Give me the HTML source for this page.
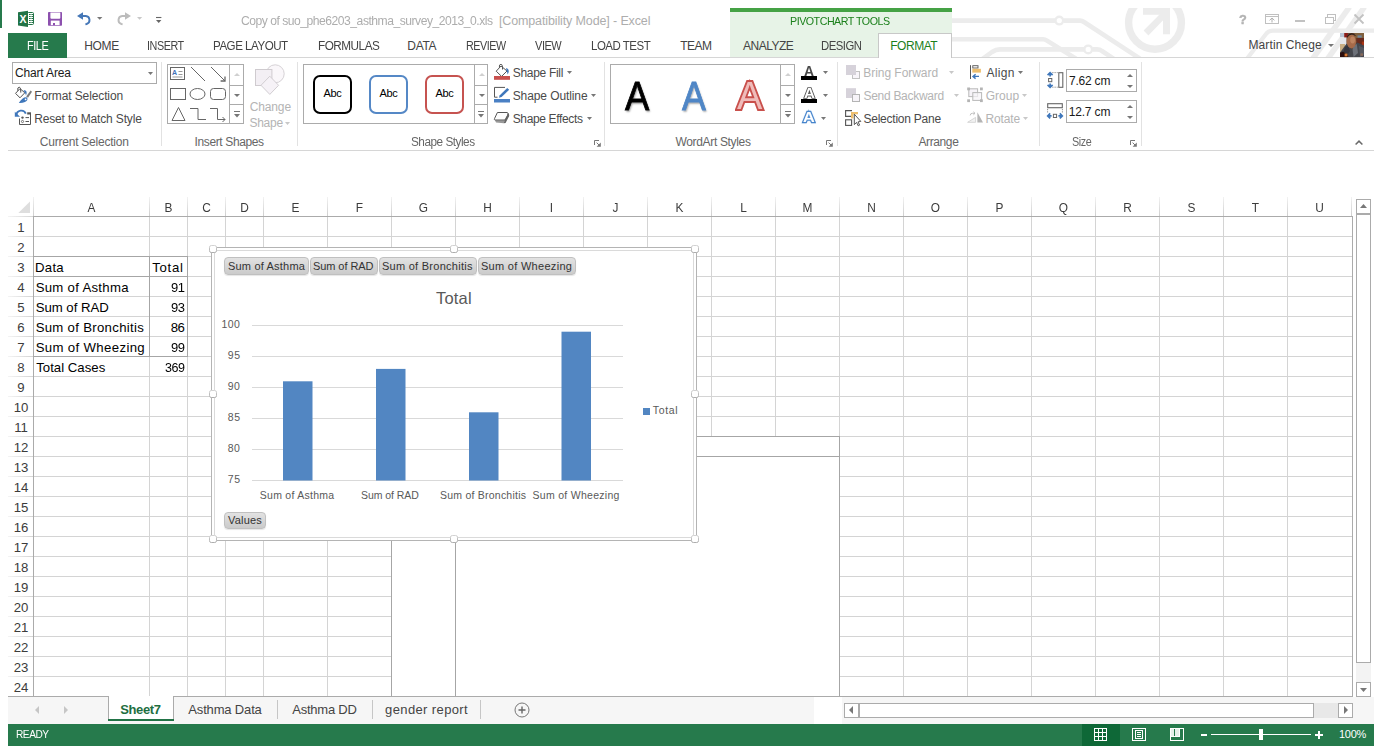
<!DOCTYPE html>
<html lang="en"><head><meta charset="utf-8"><title>Excel - PivotChart Tools</title>
<style>
html,body{margin:0;padding:0;background:#fff;}
body{width:1382px;height:754px;position:relative;overflow:hidden;font-family:"Liberation Sans", sans-serif;}
.t{position:absolute;white-space:pre;line-height:1;transform-origin:0 50%;}
svg{overflow:visible}
</style></head><body>
<div style="position:absolute;left:0px;top:0px;width:2px;height:28px;background:#267a4c;"></div>
<svg style="position:absolute;left:0;top:0" width="1382" height="58" viewBox="0 0 1382 58"><defs><clipPath id="cpT"><rect x="940" y="8" width="434" height="49"/></clipPath></defs><g clip-path="url(#cpT)">
<g fill="none" stroke="#ececec" stroke-width="4.6" stroke-linejoin="round">
<path d="M952 20.6 H1055 M1064 20.6 H1080 Q1082 20.6 1084 22 L1140 58.6"/>
<circle cx="1059.3" cy="20.6" r="3.8" stroke-width="2.4"/>
<path d="M952 39.3 H1043 Q1045 39.3 1047 40.6 L1076 58.8"/>
<path d="M981 60 L992 52 Q996 49.4 1000 49.4 H1084 M1092.5 49.4 H1097 Q1100 49.4 1102 51 L1114 59"/>
<circle cx="1088.2" cy="49.4" r="3.8" stroke-width="2.4"/>
<circle cx="1155" cy="22.8" r="26.4" stroke-width="7.4"/>
<path d="M1246 60 L1266 34 Q1268.5 30.6 1273 30.6 H1374" stroke-width="4.2"/>
<path d="M1312.5 59 L1349.5 7" stroke-width="5.6"/>
<path d="M1327.5 59 L1364.5 7" stroke-width="5.6"/>
</g>
<g fill="#ececec" stroke="none">
<path d="M1143 4 H1170 V34.3 H1163 V14.8 H1143 Z"/>
<path d="M1143.6 30.6 L1164 10 L1168.6 14.6 L1148.4 35.4 Z"/>
</g>
</g></svg>
<svg style="position:absolute;left:18px;top:10px;" width="17" height="18" viewBox="0 0 17 18">
<rect x="9.5" y="2.5" width="6" height="12" rx="1" fill="#fff" stroke="#217346" stroke-width="1"/>
<path d="M11 4.5H12.7M13.4 4.5H15M11 6.5H12.7M13.4 6.5H15M11 8.5H12.7M13.4 8.5H15M11 10.5H12.7M13.4 10.5H15M11 12.5H12.7M13.4 12.5H15" stroke="#217346" stroke-width="1.1" fill="none"/>
<path d="M0 2.2 L10 0.7 V17 L0 15.4 Z" fill="#217346"/>
<text x="4.9" y="12.7" font-size="10.5" font-weight="bold" fill="#fff" text-anchor="middle" font-family="Liberation Sans, sans-serif">X</text>
</svg>
<svg style="position:absolute;left:48px;top:12px;" width="14" height="14" viewBox="0 0 14 14">
<rect x="0" y="0" width="14" height="13.8" rx="0.8" fill="#8c50ae"/>
<path d="M2.4 0.6 H12.3 V5.7 Q12.3 6.7 11.3 6.7 H3.4 Q2.4 6.7 2.4 5.7 Z" fill="#fff"/>
<rect x="2.8" y="8.6" width="8.8" height="4.5" fill="#fff"/>
<rect x="5" y="11" width="2" height="2.2" fill="#8c50ae"/>
</svg>
<svg style="position:absolute;left:76px;top:11px;" width="16" height="15" viewBox="0 0 16 15">
<path d="M7 1.2 L1 5 L7 8.8 Z" fill="#4577b7"/>
<path d="M5 5 H9.8 A4.1 4.1 0 0 1 10.6 13 L9.4 13.3" fill="none" stroke="#4577b7" stroke-width="1.9"/>
</svg>
<svg style="position:absolute;left:97px;top:17px;" width="5" height="3" viewBox="0 0 5 3"><path d="M0 0 H5.4 L2.7 2.8 Z" fill="#777"/></svg>
<svg style="position:absolute;left:116px;top:11px;" width="16" height="15" viewBox="0 0 16 15">
<path d="M9 1.2 L15 5 L9 8.8 Z" fill="#bcbcbc"/>
<path d="M11 5 H6.2 A4.1 4.1 0 0 0 5.4 13 L6.6 13.3" fill="none" stroke="#bcbcbc" stroke-width="1.9"/>
</svg>
<svg style="position:absolute;left:137px;top:17px;" width="5" height="3" viewBox="0 0 5 3"><path d="M0 0 H5.2 L2.6 2.8 Z" fill="#c8c8c8"/></svg>
<svg style="position:absolute;left:156px;top:16px;" width="6" height="8" viewBox="0 0 6 8"><path d="M0 1.5 H5.4" stroke="#666" stroke-width="1.1"/><path d="M0 4 H5.4 L2.7 7 Z" fill="#666"/></svg>
<div style="position:absolute;left:730px;top:8px;width:222px;height:4px;background:#45a245;"></div>
<div style="position:absolute;left:730px;top:12px;width:222px;height:45px;background:#e7f3e7;"></div>
<div style="position:absolute;left:8px;top:57px;width:1366px;height:1px;background:#d6d6d6;"></div>
<div style="position:absolute;left:8px;top:33px;width:59px;height:25px;background:#267a4c;"></div>
<div style="position:absolute;left:878px;top:33px;width:74px;height:25px;background:#ffffff;border:1px solid #c8c8c8;border-bottom:none;box-sizing:border-box;"></div>
<svg style="position:absolute;left:1265px;top:14px;" width="14" height="10" viewBox="0 0 14 10"><rect x="0.5" y="0.5" width="13" height="9" fill="none" stroke="#c0c0c0"/><path d="M0 2.5H14" stroke="#c0c0c0"/><path d="M7 4.2V8.5M4.6 6.3L7 4L9.4 6.3" stroke="#b0b0b0" fill="none"/></svg>
<div style="position:absolute;left:1295px;top:20px;width:10px;height:2px;background:#c2c2c2;"></div>
<svg style="position:absolute;left:1325px;top:14px;" width="11" height="10" viewBox="0 0 11 10"><rect x="2.5" y="0.5" width="8" height="6" fill="none" stroke="#c0c0c0"/><rect x="0.5" y="3.5" width="8" height="6" fill="#fff" stroke="#c0c0c0"/></svg>
<svg style="position:absolute;left:1354px;top:14px;" width="10" height="10" viewBox="0 0 10 10"><path d="M0.5 0.5 L9.5 9.5 M9.5 0.5 L0.5 9.5" stroke="#c2c2c2" stroke-width="1.8"/></svg>
<svg style="position:absolute;left:1328px;top:44px;" width="6" height="3" viewBox="0 0 6 3"><path d="M0 0 H6 L3 3 Z" fill="#777"/></svg>
<svg style="position:absolute;left:1340px;top:33px;" width="24" height="24" viewBox="0 0 24 24">
<defs><clipPath id="av"><rect width="24" height="24"/></clipPath><filter id="avb" x="-10%" y="-10%" width="120%" height="120%"><feGaussianBlur stdDeviation="0.55"/></filter></defs>
<g clip-path="url(#av)"><rect width="24" height="24" fill="#6a4a34"/><g filter="url(#avb)">
<rect x="-1" y="-1" width="7.5" height="14" fill="#e4e6ea"/>
<rect x="-1" y="-1" width="5" height="5" fill="#b8c4d4"/>
<rect x="-1" y="11" width="6" height="8" fill="#c8ae84"/>
<rect x="4.2" y="-1" width="3.6" height="5.4" fill="#8a1c16"/>
<rect x="14.5" y="-1" width="11" height="6" fill="#80603c"/>
<rect x="17.5" y="2.4" width="4.2" height="2.2" fill="#6e86a0"/>
<rect x="16.5" y="5" width="9" height="7" fill="#6a2a1a"/>
<rect x="21.8" y="8.6" width="3" height="3.6" fill="#a83418"/>
<path d="M-1 25 L-1 21 L6.6 10.4 L9.4 14.4 L12.4 16.4 L15 11.4 L17.2 9.4 L25 13 V25 Z" fill="#44464e"/>
<path d="M13 13 L16.8 11 L18 20 L13.6 24 L12.6 17 Z" fill="#6c7078"/>
<path d="M5 14 L8 12 L10 18 L6 24 H2 Z" fill="#34363c"/>
<path d="M19 13 L24 15 V22 L20 24 Z" fill="#565860"/>
<ellipse cx="11.4" cy="8.4" rx="4.7" ry="6.9" fill="#a66a48"/>
<ellipse cx="12.6" cy="7" rx="2.4" ry="3.4" fill="#be8460"/>
<path d="M6.8 3.4 Q11 -2.4 15.8 2.4 L15.4 3 Q11 -0.4 7.2 4.4 Z" fill="#2c1c16"/>
<path d="M-1 25 V20.4 L3 18.4 L7.4 22 L9 25 Z" fill="#2c100a"/>
<rect x="4.6" y="20.6" width="2.8" height="2.8" fill="#d87830"/>
<rect x="20.4" y="20.4" width="2.6" height="2.4" fill="#8a6a58"/>
</g></g></svg>
<div style="position:absolute;left:8px;top:150px;width:1366px;height:1px;background:#d6d6d6;"></div>
<div style="position:absolute;left:161px;top:62px;width:1px;height:84px;background:#e2e2e2;"></div>
<div style="position:absolute;left:297px;top:62px;width:1px;height:84px;background:#e2e2e2;"></div>
<div style="position:absolute;left:604px;top:62px;width:1px;height:84px;background:#e2e2e2;"></div>
<div style="position:absolute;left:837px;top:62px;width:1px;height:84px;background:#e2e2e2;"></div>
<div style="position:absolute;left:1039px;top:62px;width:1px;height:84px;background:#e2e2e2;"></div>
<div style="position:absolute;left:1141px;top:62px;width:1px;height:84px;background:#e2e2e2;"></div>
<div style="position:absolute;left:12px;top:62px;width:145px;height:22px;background:#fff;border:1px solid #ababab;box-sizing:border-box;"></div>
<svg style="position:absolute;left:147.5px;top:71.5px;" width="5" height="3" viewBox="0 0 5 3"><path d="M0 0 H5 L2.5 3 Z" fill="#777777"/></svg>
<svg style="position:absolute;left:14px;top:86px;" width="18" height="18" viewBox="0 0 18 18">
<path d="M1.5 7.4 L6 2.6 L10.8 6.8 L6 11.8 Z" fill="#fff" stroke="#555" stroke-width="1"/>
<path d="M3.8 4.8 Q3.2 1 5.4 1.1 Q7 1.4 6.8 6.6" fill="none" stroke="#555" stroke-width="1"/>
<path d="M9.6 4 Q14.2 4.2 12 9.6 Q11.6 7.4 10.6 6.6 Z" fill="#3f77bb"/>
<path d="M4.8 16.9 Q9 10.4 13 11.4 Q14.6 14 11 16 Q8 17.2 4.8 16.9 Z" fill="#3f77bb"/>
<circle cx="11.6" cy="13.3" r="0.9" fill="#fff"/>
<path d="M12.2 10.4 L16.6 4.6 L18 5.8 L14 11.8 Z" fill="#7a7a7a"/>
</svg>
<svg style="position:absolute;left:14px;top:110px;" width="18" height="16" viewBox="0 0 18 16">
<path d="M11.8 3.6 A4.9 4.9 0 0 0 2.4 5.2" fill="none" stroke="#3f77bb" stroke-width="1.9"/>
<path d="M0.8 1.8 V6.8 H6 Z" fill="#3f77bb"/>
<path d="M5.5 8.5 V14.5 H16.5 V3" fill="none" stroke="#555" stroke-width="1"/>
<rect x="13.2" y="2.3" width="3.8" height="2.2" fill="#555"/>
<circle cx="8.5" cy="7.6" r="1.2" fill="#555"/>
<circle cx="8.5" cy="11.5" r="1.1" fill="#fff" stroke="#555" stroke-width="0.8"/>
<path d="M11.5 7.6 H15 M11.5 11.5 H15" stroke="#555" stroke-width="1"/>
</svg>
<div style="position:absolute;left:167px;top:64px;width:77px;height:60px;background:#fff;border:1px solid #ababab;box-sizing:border-box;"></div>
<div style="position:absolute;left:229px;top:64px;width:1px;height:60px;background:#ababab;"></div>
<div style="position:absolute;left:229px;top:85px;width:15px;height:1px;background:#ababab;"></div>
<div style="position:absolute;left:229px;top:104px;width:15px;height:1px;background:#ababab;"></div>
<svg style="position:absolute;left:234.0px;top:73px;" width="6" height="3" viewBox="0 0 6 3"><path d="M0 3 H6 L3 0 Z" fill="#d0d0d0"/></svg>
<svg style="position:absolute;left:234.0px;top:93.6px;" width="6" height="3" viewBox="0 0 6 3"><path d="M0 0 H6 L3 3 Z" fill="#777"/></svg>
<svg style="position:absolute;left:233.5px;top:111px;" width="6" height="7" viewBox="0 0 6 7"><rect x="0" y="0" width="6" height="1" fill="#777" shape-rendering="crispEdges"/><path d="M0 3 H6 L3 6.4 Z" fill="#777"/></svg>
<svg style="position:absolute;left:167px;top:64px;" width="62" height="60" viewBox="0 0 62 60">
<g fill="none" stroke="#666" stroke-width="1">
<rect x="3.5" y="3.5" width="14" height="12" fill="#fff"/>
<path d="M11.5 7.5H15.5M11.5 10.5H15.5M5.5 13H15.5" stroke="#999"/>
<path d="M24 3 L38 17"/>
<path d="M44 3 L58 17"/><path d="M58 12.6 V17 H53.6" stroke-width="1.3"/>
<rect x="3.5" y="24.5" width="15" height="11"/>
<ellipse cx="30.5" cy="30" rx="7.5" ry="5.5"/>
<rect x="43.5" y="24.5" width="15" height="11" rx="3"/>
<path d="M11.5 43.5 L18 56.5 H5 Z"/>
<path d="M23 44.5 H31 V55.5 H39"/>
<path d="M43 44.5 H50.5 V55.5 H58 M55.5 53 L58 55.5 L55.5 58"/>
</g>
<text x="5" y="11" font-size="7" font-weight="bold" fill="#3f6fb7" font-family="Liberation Sans, sans-serif">A</text>
</svg>
<svg style="position:absolute;left:255px;top:64px;" width="30" height="32" viewBox="0 0 30 32">
<circle cx="20.2" cy="9.8" r="9" fill="#faf7fa" stroke="#d6d2d6"/>
<rect x="0.5" y="5.5" width="16.4" height="16" fill="#f3eff4" stroke="#cfcbcf"/>
<path d="M14.8 12.2 L23.6 21.3 L14.8 30.4 L6 21.3 Z" fill="#f6f2f7" stroke="#d2ced2"/>
</svg>
<svg style="position:absolute;left:285px;top:122px;" width="5" height="3" viewBox="0 0 5 3"><path d="M0 0 H5 L2.5 3 Z" fill="#c8c8c8"/></svg>
<div style="position:absolute;left:303px;top:64px;width:185px;height:60px;background:#fff;border:1px solid #ababab;box-sizing:border-box;"></div>
<div style="position:absolute;left:474px;top:64px;width:1px;height:60px;background:#ababab;"></div>
<div style="position:absolute;left:474px;top:85px;width:14px;height:1px;background:#ababab;"></div>
<div style="position:absolute;left:474px;top:104px;width:14px;height:1px;background:#ababab;"></div>
<svg style="position:absolute;left:478.5px;top:73px;" width="6" height="3" viewBox="0 0 6 3"><path d="M0 3 H6 L3 0 Z" fill="#d0d0d0"/></svg>
<svg style="position:absolute;left:478.5px;top:93.6px;" width="6" height="3" viewBox="0 0 6 3"><path d="M0 0 H6 L3 3 Z" fill="#777"/></svg>
<svg style="position:absolute;left:478.0px;top:111px;" width="6" height="7" viewBox="0 0 6 7"><rect x="0" y="0" width="6" height="1" fill="#777" shape-rendering="crispEdges"/><path d="M0 3 H6 L3 6.4 Z" fill="#777"/></svg>
<div style="position:absolute;left:313px;top:75px;width:39px;height:39px;background:#fff;border:2px solid #000000;border-radius:7px;box-sizing:border-box;"></div>
<div style="position:absolute;left:369px;top:75px;width:39px;height:39px;background:#fff;border:2px solid #5588c6;border-radius:7px;box-sizing:border-box;"></div>
<div style="position:absolute;left:425px;top:75px;width:39px;height:39px;background:#fff;border:2px solid #c65350;border-radius:7px;box-sizing:border-box;"></div>
<svg style="position:absolute;left:494px;top:63px;" width="17" height="18" viewBox="0 0 17 18">
<path d="M2.2 8.2 L7 3 L13 8 L7.6 13.4 Z" fill="#fff" stroke="#555" stroke-width="1"/>
<path d="M5.4 4.6 Q4.8 1.2 7 1.3 Q8.8 1.4 8.5 6.5" fill="none" stroke="#555" stroke-width="1"/>
<path d="M12 5 Q16.6 6 13.6 11.6 Q13.4 9 12.6 8 Z" fill="#3f77bb"/>
<rect x="0" y="13" width="16" height="3.8" fill="#c9504e"/>
</svg>
<svg style="position:absolute;left:566.5px;top:71px;" width="5" height="3" viewBox="0 0 5 3"><path d="M0 0 H5 L2.5 3 Z" fill="#777777"/></svg>
<svg style="position:absolute;left:494px;top:86px;" width="17" height="18" viewBox="0 0 17 18">
<path d="M3.5 11.2 H0.5 V1.4 H11" fill="none" stroke="#555" stroke-width="1"/>
<path d="M13.2 2 L15.2 3.8 L7.6 11 L4.8 11.8 L5.8 9.2 Z" fill="#3f77bb"/>
<rect x="0" y="13" width="16" height="3.5" fill="#4a80c4"/>
</svg>
<svg style="position:absolute;left:590.5px;top:94px;" width="5" height="3" viewBox="0 0 5 3"><path d="M0 0 H5 L2.5 3 Z" fill="#777777"/></svg>
<svg style="position:absolute;left:494px;top:112px;" width="17" height="13" viewBox="0 0 17 13">
<path d="M1 8.2 H10.6 L9.8 11.3 L2 10.6 Z" fill="#999"/>
<path d="M13.6 0.6 Q16.4 2.4 14.4 5.6 L11.6 11 L9.8 11.3 L10.6 8.2 Z" fill="#666"/>
<path d="M3.4 0.5 H13 Q14.8 0.8 13.6 3.2 L11 8 H0.8 Q0 7.6 0.6 6.4 Z" fill="#fdfdfd" stroke="#555" stroke-width="1"/>
</svg>
<svg style="position:absolute;left:587px;top:117px;" width="5" height="3" viewBox="0 0 5 3"><path d="M0 0 H5 L2.5 3 Z" fill="#777777"/></svg>
<svg style="position:absolute;left:593.5px;top:139.5px;" width="7" height="7" viewBox="0 0 7 7"><path d="M0.5 5 V0.5 H5" fill="none" stroke="#777" stroke-width="1"/><path d="M2.6 2.6 L5 5" stroke="#777" stroke-width="1"/><path d="M6.8 2.6 V6.8 H2.6 Z" fill="#777"/></svg>
<div style="position:absolute;left:610px;top:64px;width:185px;height:60px;background:#fff;border:1px solid #ababab;box-sizing:border-box;"></div>
<div style="position:absolute;left:780px;top:64px;width:1px;height:60px;background:#ababab;"></div>
<div style="position:absolute;left:780px;top:85px;width:15px;height:1px;background:#ababab;"></div>
<div style="position:absolute;left:780px;top:104px;width:15px;height:1px;background:#ababab;"></div>
<svg style="position:absolute;left:785.0px;top:73px;" width="6" height="3" viewBox="0 0 6 3"><path d="M0 3 H6 L3 0 Z" fill="#d0d0d0"/></svg>
<svg style="position:absolute;left:785.0px;top:93.6px;" width="6" height="3" viewBox="0 0 6 3"><path d="M0 0 H6 L3 3 Z" fill="#777"/></svg>
<svg style="position:absolute;left:784.5px;top:111px;" width="6" height="7" viewBox="0 0 6 7"><rect x="0" y="0" width="6" height="1" fill="#777" shape-rendering="crispEdges"/><path d="M0 3 H6 L3 6.4 Z" fill="#777"/></svg>
<div style="position:absolute;left:801px;top:76px;width:16px;height:4px;background:#000;"></div>
<svg style="position:absolute;left:823px;top:71px;" width="5" height="3" viewBox="0 0 5 3"><path d="M0 0 H5 L2.5 3 Z" fill="#777777"/></svg>
<div style="position:absolute;left:801px;top:99px;width:16px;height:4px;background:#000;"></div>
<svg style="position:absolute;left:823px;top:94px;" width="5" height="3" viewBox="0 0 5 3"><path d="M0 0 H5 L2.5 3 Z" fill="#777777"/></svg>
<svg style="position:absolute;left:821px;top:117px;" width="5" height="3" viewBox="0 0 5 3"><path d="M0 0 H5 L2.5 3 Z" fill="#777777"/></svg>
<svg style="position:absolute;left:826px;top:139.5px;" width="7" height="7" viewBox="0 0 7 7"><path d="M0.5 5 V0.5 H5" fill="none" stroke="#777" stroke-width="1"/><path d="M2.6 2.6 L5 5" stroke="#777" stroke-width="1"/><path d="M6.8 2.6 V6.8 H2.6 Z" fill="#777"/></svg>
<svg style="position:absolute;left:845px;top:64px;" width="16" height="16" viewBox="0 0 16 16"><rect x="7.5" y="7.5" width="7" height="7" fill="#f8f5fa" stroke="#c2c2c2"/><rect x="1" y="1" width="10" height="10" fill="#d6d2da"/></svg>
<svg style="position:absolute;left:948.5px;top:71px;" width="5" height="3" viewBox="0 0 5 3"><path d="M0 0 H5 L2.5 3 Z" fill="#c8c8c8"/></svg>
<svg style="position:absolute;left:845px;top:87px;" width="16" height="16" viewBox="0 0 16 16"><rect x="1" y="1.2" width="10" height="9.8" fill="#d6d2da"/><rect x="7.5" y="7.5" width="7" height="7" fill="#f6f3f8" stroke="#b4b4b4"/></svg>
<svg style="position:absolute;left:954px;top:94px;" width="5" height="3" viewBox="0 0 5 3"><path d="M0 0 H5 L2.5 3 Z" fill="#c8c8c8"/></svg>
<svg style="position:absolute;left:845px;top:110px;" width="17" height="16" viewBox="0 0 17 16">
<path d="M7 0.6 H0.6 V6.4 H7" fill="none" stroke="#555" stroke-width="1.1"/>
<path d="M6 2 H13 V4.2 H8.4 V8.6 H6 Z" fill="#eebf6e"/>
<rect x="0.6" y="9.8" width="6" height="5.6" fill="#fff" stroke="#555" stroke-width="1.1"/>
<path d="M9.3 4.2 V14.6 L11.6 12.4 L13.2 15.8 L14.6 15.1 L13 11.9 L15.8 11.4 Z" fill="#fff" stroke="#444" stroke-width="0.9" stroke-linejoin="round"/>
</svg>
<svg style="position:absolute;left:970px;top:65px;" width="12" height="15" viewBox="0 0 12 15">
<path d="M0.5 0.2 V14" stroke="#555" stroke-width="1"/>
<rect x="2.8" y="0.7" width="5.2" height="2.3" fill="#fff" stroke="#555" stroke-width="0.9"/>
<rect x="2.3" y="3.8" width="8.6" height="3.8" fill="#eebf6e"/>
<path d="M9 11.4 H3 M5.6 9.2 L3 11.4 L5.6 13.6" fill="none" stroke="#3f77bb" stroke-width="1.4"/>
</svg>
<svg style="position:absolute;left:1017.5px;top:71px;" width="5" height="3" viewBox="0 0 5 3"><path d="M0 0 H5 L2.5 3 Z" fill="#777777"/></svg>
<svg style="position:absolute;left:967px;top:87px;" width="17" height="16" viewBox="0 0 17 16">
<rect x="1.8" y="1.8" width="8.8" height="7.8" fill="#f6f3f8" stroke="#b8b8b8"/>
<rect x="5.8" y="5.6" width="8.8" height="7.8" fill="#f6f3f8" fill-opacity="0.7" stroke="#b8b8b8"/>
<g fill="#b4b4b4"><rect x="0.2" y="0.5" width="2.8" height="2.8"/><rect x="13" y="0.5" width="2.8" height="2.8"/><rect x="0.2" y="12.3" width="2.8" height="2.8"/><rect x="13" y="12.3" width="2.8" height="2.8"/></g>
</svg>
<svg style="position:absolute;left:1022px;top:94px;" width="5" height="3" viewBox="0 0 5 3"><path d="M0 0 H5 L2.5 3 Z" fill="#c8c8c8"/></svg>
<svg style="position:absolute;left:967px;top:111px;" width="17" height="13" viewBox="0 0 17 13">
<path d="M0.6 11.3 H8.6 V6.4 Z" fill="#f2f2f2" stroke="#d2d2d2" stroke-width="0.9"/>
<path d="M10.4 1.2 V11.6 H16 Z" fill="#b4b4b4"/>
<path d="M3.2 4.4 Q3.4 2.2 5.4 2.3 H8 M6.4 0.8 L8 2.3 L6.4 3.8" fill="none" stroke="#c0c0c0" stroke-width="1"/>
</svg>
<svg style="position:absolute;left:1023px;top:117px;" width="5" height="3" viewBox="0 0 5 3"><path d="M0 0 H5 L2.5 3 Z" fill="#c8c8c8"/></svg>
<svg style="position:absolute;left:1046px;top:71px;" width="18" height="18" viewBox="0 0 18 18">
<rect x="12.8" y="1.7" width="4" height="14.6" fill="#fff" stroke="#666" stroke-width="1.1"/>
<path d="M6.4 1.6 H11.6 M6.4 16.2 H11.6" stroke="#777" stroke-width="1" stroke-dasharray="1 1.2"/>
<rect x="2.6" y="7.5" width="3.2" height="3.2" fill="#fff" stroke="#666" stroke-width="1"/>
<path d="M4.1 2 V5.6 M1.6 4.2 L4.1 1.7 L6.6 4.2" fill="none" stroke="#3f77bb" stroke-width="1.7"/>
<path d="M4.1 12.4 V16 M1.6 13.8 L4.1 16.3 L6.6 13.8" fill="none" stroke="#3f77bb" stroke-width="1.7"/>
</svg>
<div style="position:absolute;left:1066px;top:69px;width:71px;height:23px;background:#fff;border:1px solid #ababab;box-sizing:border-box;"></div>
<svg style="position:absolute;left:1126.5px;top:74px;" width="6" height="3" viewBox="0 0 6 3"><path d="M0 3 H6 L3 0 Z" fill="#777"/></svg>
<svg style="position:absolute;left:1126.5px;top:84.5px;" width="6" height="3" viewBox="0 0 6 3"><path d="M0 0 H6 L3 3 Z" fill="#777"/></svg>
<svg style="position:absolute;left:1046px;top:103px;" width="18" height="17" viewBox="0 0 18 17">
<rect x="1.7" y="0.7" width="14.6" height="4" fill="#fff" stroke="#666" stroke-width="1.1"/>
<path d="M1.6 6.2 V10.6 M16.4 6.2 V10.6" stroke="#777" stroke-width="1" stroke-dasharray="1 1.2"/>
<rect x="7.4" y="11.3" width="3.2" height="3.2" fill="#fff" stroke="#666" stroke-width="1"/>
<path d="M2 12.9 H5.6 M4.2 10.4 L1.7 12.9 L4.2 15.4" fill="none" stroke="#3f77bb" stroke-width="1.7"/>
<path d="M12.4 12.9 H16 M13.8 10.4 L16.3 12.9 L13.8 15.4" fill="none" stroke="#3f77bb" stroke-width="1.7"/>
</svg>
<div style="position:absolute;left:1066px;top:100px;width:71px;height:23px;background:#fff;border:1px solid #ababab;box-sizing:border-box;"></div>
<svg style="position:absolute;left:1126.5px;top:105px;" width="6" height="3" viewBox="0 0 6 3"><path d="M0 3 H6 L3 0 Z" fill="#777"/></svg>
<svg style="position:absolute;left:1126.5px;top:115.5px;" width="6" height="3" viewBox="0 0 6 3"><path d="M0 0 H6 L3 3 Z" fill="#777"/></svg>
<svg style="position:absolute;left:1130px;top:139.5px;" width="7" height="7" viewBox="0 0 7 7"><path d="M0.5 5 V0.5 H5" fill="none" stroke="#777" stroke-width="1"/><path d="M2.6 2.6 L5 5" stroke="#777" stroke-width="1"/><path d="M6.8 2.6 V6.8 H2.6 Z" fill="#777"/></svg>
<svg style="position:absolute;left:1355px;top:139.5px;" width="8" height="5" viewBox="0 0 8 5"><path d="M0.6 4.5 L4 1.1 L7.4 4.5" fill="none" stroke="#6a6a6a" stroke-width="1.5"/></svg>
<svg style="position:absolute;left:0;top:0" width="1382" height="754" viewBox="0 0 1382 754" shape-rendering="crispEdges"><defs><linearGradient id="rhg" x1="0" x2="1" y1="0" y2="0"><stop offset="0" stop-color="#f4f4f4"/><stop offset="1" stop-color="#d2d2d2"/></linearGradient><linearGradient id="chg" x1="0" x2="0" y1="0" y2="1"><stop offset="0" stop-color="#f2f2f2"/><stop offset="1" stop-color="#cfcfcf"/></linearGradient></defs><rect x="34" y="236" width="1318" height="1" fill="#d4d4d4"/><rect x="8" y="236" width="26" height="1" fill="url(#rhg)"/><rect x="34" y="256" width="1318" height="1" fill="#d4d4d4"/><rect x="8" y="256" width="26" height="1" fill="url(#rhg)"/><rect x="34" y="276" width="1318" height="1" fill="#d4d4d4"/><rect x="8" y="276" width="26" height="1" fill="url(#rhg)"/><rect x="34" y="296" width="1318" height="1" fill="#d4d4d4"/><rect x="8" y="296" width="26" height="1" fill="url(#rhg)"/><rect x="34" y="316" width="1318" height="1" fill="#d4d4d4"/><rect x="8" y="316" width="26" height="1" fill="url(#rhg)"/><rect x="34" y="336" width="1318" height="1" fill="#d4d4d4"/><rect x="8" y="336" width="26" height="1" fill="url(#rhg)"/><rect x="34" y="356" width="1318" height="1" fill="#d4d4d4"/><rect x="8" y="356" width="26" height="1" fill="url(#rhg)"/><rect x="34" y="376" width="1318" height="1" fill="#d4d4d4"/><rect x="8" y="376" width="26" height="1" fill="url(#rhg)"/><rect x="34" y="396" width="1318" height="1" fill="#d4d4d4"/><rect x="8" y="396" width="26" height="1" fill="url(#rhg)"/><rect x="34" y="416" width="1318" height="1" fill="#d4d4d4"/><rect x="8" y="416" width="26" height="1" fill="url(#rhg)"/><rect x="34" y="436" width="1318" height="1" fill="#d4d4d4"/><rect x="8" y="436" width="26" height="1" fill="url(#rhg)"/><rect x="34" y="456" width="1318" height="1" fill="#d4d4d4"/><rect x="8" y="456" width="26" height="1" fill="url(#rhg)"/><rect x="34" y="476" width="1318" height="1" fill="#d4d4d4"/><rect x="8" y="476" width="26" height="1" fill="url(#rhg)"/><rect x="34" y="496" width="1318" height="1" fill="#d4d4d4"/><rect x="8" y="496" width="26" height="1" fill="url(#rhg)"/><rect x="34" y="516" width="1318" height="1" fill="#d4d4d4"/><rect x="8" y="516" width="26" height="1" fill="url(#rhg)"/><rect x="34" y="536" width="1318" height="1" fill="#d4d4d4"/><rect x="8" y="536" width="26" height="1" fill="url(#rhg)"/><rect x="34" y="556" width="1318" height="1" fill="#d4d4d4"/><rect x="8" y="556" width="26" height="1" fill="url(#rhg)"/><rect x="34" y="576" width="1318" height="1" fill="#d4d4d4"/><rect x="8" y="576" width="26" height="1" fill="url(#rhg)"/><rect x="34" y="596" width="1318" height="1" fill="#d4d4d4"/><rect x="8" y="596" width="26" height="1" fill="url(#rhg)"/><rect x="34" y="616" width="1318" height="1" fill="#d4d4d4"/><rect x="8" y="616" width="26" height="1" fill="url(#rhg)"/><rect x="34" y="636" width="1318" height="1" fill="#d4d4d4"/><rect x="8" y="636" width="26" height="1" fill="url(#rhg)"/><rect x="34" y="656" width="1318" height="1" fill="#d4d4d4"/><rect x="8" y="656" width="26" height="1" fill="url(#rhg)"/><rect x="34" y="676" width="1318" height="1" fill="#d4d4d4"/><rect x="8" y="676" width="26" height="1" fill="url(#rhg)"/><rect x="149" y="217" width="1" height="479" fill="#d4d4d4"/><rect x="187" y="217" width="1" height="479" fill="#d4d4d4"/><rect x="225" y="217" width="1" height="479" fill="#d4d4d4"/><rect x="263" y="217" width="1" height="479" fill="#d4d4d4"/><rect x="327" y="217" width="1" height="479" fill="#d4d4d4"/><rect x="391" y="217" width="1" height="479" fill="#d4d4d4"/><rect x="455" y="217" width="1" height="479" fill="#d4d4d4"/><rect x="519" y="217" width="1" height="479" fill="#d4d4d4"/><rect x="583" y="217" width="1" height="479" fill="#d4d4d4"/><rect x="647" y="217" width="1" height="479" fill="#d4d4d4"/><rect x="711" y="217" width="1" height="479" fill="#d4d4d4"/><rect x="775" y="217" width="1" height="479" fill="#d4d4d4"/><rect x="839" y="217" width="1" height="479" fill="#d4d4d4"/><rect x="903" y="217" width="1" height="479" fill="#d4d4d4"/><rect x="967" y="217" width="1" height="479" fill="#d4d4d4"/><rect x="1031" y="217" width="1" height="479" fill="#d4d4d4"/><rect x="1095" y="217" width="1" height="479" fill="#d4d4d4"/><rect x="1159" y="217" width="1" height="479" fill="#d4d4d4"/><rect x="1223" y="217" width="1" height="479" fill="#d4d4d4"/><rect x="1287" y="217" width="1" height="479" fill="#d4d4d4"/><rect x="33" y="197" width="1" height="19" fill="url(#chg)"/><rect x="149" y="197" width="1" height="19" fill="url(#chg)"/><rect x="187" y="197" width="1" height="19" fill="url(#chg)"/><rect x="225" y="197" width="1" height="19" fill="url(#chg)"/><rect x="263" y="197" width="1" height="19" fill="url(#chg)"/><rect x="327" y="197" width="1" height="19" fill="url(#chg)"/><rect x="391" y="197" width="1" height="19" fill="url(#chg)"/><rect x="455" y="197" width="1" height="19" fill="url(#chg)"/><rect x="519" y="197" width="1" height="19" fill="url(#chg)"/><rect x="583" y="197" width="1" height="19" fill="url(#chg)"/><rect x="647" y="197" width="1" height="19" fill="url(#chg)"/><rect x="711" y="197" width="1" height="19" fill="url(#chg)"/><rect x="775" y="197" width="1" height="19" fill="url(#chg)"/><rect x="839" y="197" width="1" height="19" fill="url(#chg)"/><rect x="903" y="197" width="1" height="19" fill="url(#chg)"/><rect x="967" y="197" width="1" height="19" fill="url(#chg)"/><rect x="1031" y="197" width="1" height="19" fill="url(#chg)"/><rect x="1095" y="197" width="1" height="19" fill="url(#chg)"/><rect x="1159" y="197" width="1" height="19" fill="url(#chg)"/><rect x="1223" y="197" width="1" height="19" fill="url(#chg)"/><rect x="1287" y="197" width="1" height="19" fill="url(#chg)"/><rect x="1351" y="197" width="1" height="19" fill="url(#chg)"/><rect x="392" y="437" width="447" height="259" fill="#fff"/><rect x="8" y="216" width="26" height="1" fill="url(#rhg)"/><rect x="33" y="216" width="1320" height="1" fill="#ababab"/><rect x="33" y="216" width="1" height="481" fill="#ababab"/><rect x="1352" y="216" width="1" height="481" fill="#ababab"/><rect x="8" y="696" width="1345" height="1" fill="#ababab"/><rect x="33" y="256" width="155" height="1" fill="#a6a6a6"/><rect x="33" y="276" width="155" height="1" fill="#a6a6a6"/><rect x="33" y="356" width="155" height="1" fill="#a6a6a6"/><rect x="149" y="256" width="1" height="101" fill="#a6a6a6"/><rect x="187" y="256" width="1" height="101" fill="#a6a6a6"/><rect x="391" y="436" width="449" height="1" fill="#a6a6a6"/><rect x="455" y="456" width="385" height="1" fill="#a6a6a6"/><rect x="391" y="436" width="1" height="260" fill="#a6a6a6"/><rect x="455" y="456" width="1" height="240" fill="#a6a6a6"/><rect x="839" y="436" width="1" height="260" fill="#a6a6a6"/><path d="M30 201.5 V213 H18.3 Z" fill="#dedede" shape-rendering="geometricPrecision"/></svg>
<svg style="position:absolute;left:0;top:0" width="1382" height="754" viewBox="0 0 1382 754"><defs><linearGradient id="hg" x1="0" x2="0" y1="0" y2="1"><stop offset="0" stop-color="#d2d2d2"/><stop offset="1" stop-color="#adadad"/></linearGradient></defs><rect x="211" y="247" width="486" height="294" fill="#fff"/><rect x="211.5" y="247.5" width="485" height="293" fill="none" stroke="#b4b4b4"/><rect x="214.5" y="250.5" width="479" height="287" fill="none" stroke="#dadada"/><rect x="252" y="325" width="371" height="1" fill="#d9d9d9"/><rect x="252" y="356" width="371" height="1" fill="#d9d9d9"/><rect x="252" y="387" width="371" height="1" fill="#d9d9d9"/><rect x="252" y="418" width="371" height="1" fill="#d9d9d9"/><rect x="252" y="449" width="371" height="1" fill="#d9d9d9"/><rect x="252" y="480" width="371" height="1" fill="#d9d9d9"/><rect x="283" y="381.3" width="29.5" height="99.2" fill="#5286c2"/><rect x="376" y="368.9" width="29.5" height="111.6" fill="#5286c2"/><rect x="469" y="412.3" width="29.5" height="68.2" fill="#5286c2"/><rect x="561.5" y="331.7" width="29.5" height="148.8" fill="#5286c2"/><rect x="643" y="408" width="7" height="7" fill="#5286c2"/><rect x="209.5" y="245.5" width="7" height="7" rx="1.8" fill="#fff" stroke="url(#hg)"/><rect x="450.5" y="245.5" width="7" height="7" rx="1.8" fill="#fff" stroke="url(#hg)"/><rect x="691.5" y="245.5" width="7" height="7" rx="1.8" fill="#fff" stroke="url(#hg)"/><rect x="209.5" y="390.5" width="7" height="7" rx="1.8" fill="#fff" stroke="url(#hg)"/><rect x="691.5" y="390.5" width="7" height="7" rx="1.8" fill="#fff" stroke="url(#hg)"/><rect x="209.5" y="535.5" width="7" height="7" rx="1.8" fill="#fff" stroke="url(#hg)"/><rect x="450.5" y="535.5" width="7" height="7" rx="1.8" fill="#fff" stroke="url(#hg)"/><rect x="691.5" y="535.5" width="7" height="7" rx="1.8" fill="#fff" stroke="url(#hg)"/></svg>
<div style="position:absolute;left:224px;top:257px;width:84.5px;height:18px;background:linear-gradient(#e2e2e2,#cbcbcb);border:1px solid #c0c0c0;border-radius:4px;box-sizing:border-box;box-shadow:0 1px 1px rgba(0,0,0,0.10);"></div>
<div style="position:absolute;left:309.5px;top:257px;width:68.0px;height:18px;background:linear-gradient(#e2e2e2,#cbcbcb);border:1px solid #c0c0c0;border-radius:4px;box-sizing:border-box;box-shadow:0 1px 1px rgba(0,0,0,0.10);"></div>
<div style="position:absolute;left:378.5px;top:257px;width:98.0px;height:18px;background:linear-gradient(#e2e2e2,#cbcbcb);border:1px solid #c0c0c0;border-radius:4px;box-sizing:border-box;box-shadow:0 1px 1px rgba(0,0,0,0.10);"></div>
<div style="position:absolute;left:477.5px;top:257px;width:98.0px;height:18px;background:linear-gradient(#e2e2e2,#cbcbcb);border:1px solid #c0c0c0;border-radius:4px;box-sizing:border-box;box-shadow:0 1px 1px rgba(0,0,0,0.10);"></div>
<div style="position:absolute;left:224px;top:511.5px;width:42px;height:17.5px;background:linear-gradient(#e2e2e2,#cbcbcb);border:1px solid #c0c0c0;border-radius:4px;box-sizing:border-box;box-shadow:0 1px 1px rgba(0,0,0,0.10);"></div>
<div style="position:absolute;left:8px;top:697px;width:1366px;height:27px;background:#f6f6f6;"></div>
<div style="position:absolute;left:814px;top:697px;width:28px;height:27px;background:#fff;"></div>
<div style="position:absolute;left:1353px;top:197px;width:21px;height:500px;background:#fff;"></div>
<div style="position:absolute;left:1356px;top:214px;width:15px;height:449px;background:#fff;border:1px solid #ababab;box-sizing:border-box;"></div>
<div style="position:absolute;left:1356px;top:663px;width:15px;height:19px;background:#f3f3f3;"></div>
<div style="position:absolute;left:1356px;top:199px;width:15px;height:15px;background:#fff;border:1px solid #ababab;box-sizing:border-box;"></div>
<svg style="position:absolute;left:1360px;top:204px;" width="7" height="4" viewBox="0 0 7 4"><path d="M0 4 H7 L3.5 0 Z" fill="#777"/></svg>
<div style="position:absolute;left:1356px;top:682px;width:15px;height:15px;background:#fff;border:1px solid #ababab;box-sizing:border-box;"></div>
<svg style="position:absolute;left:1360px;top:688px;" width="7" height="4" viewBox="0 0 7 4"><path d="M0 0 H7 L3.5 4 Z" fill="#777"/></svg>
<div style="position:absolute;left:844px;top:703px;width:15px;height:15px;background:#fff;border:1px solid #ababab;box-sizing:border-box;"></div>
<svg style="position:absolute;left:849px;top:706px;" width="4" height="8" viewBox="0 0 4 8"><path d="M4 0 V8 L0 4 Z" fill="#777"/></svg>
<div style="position:absolute;left:859px;top:703px;width:455px;height:15px;background:#fff;border:1px solid #ababab;box-sizing:border-box;"></div>
<div style="position:absolute;left:1314px;top:703px;width:24px;height:15px;background:#e8e8e8;"></div>
<div style="position:absolute;left:1338px;top:703px;width:15px;height:15px;background:#fff;border:1px solid #ababab;box-sizing:border-box;"></div>
<svg style="position:absolute;left:1344px;top:706px;" width="4" height="8" viewBox="0 0 4 8"><path d="M0 0 V8 L4 4 Z" fill="#777"/></svg>
<div style="position:absolute;left:108px;top:696px;width:66px;height:24px;background:#fff;border-left:1px solid #ababab;border-right:1px solid #ababab;box-sizing:border-box;"></div>
<div style="position:absolute;left:108px;top:719px;width:66px;height:2px;background:#217346;"></div>
<div style="position:absolute;left:277px;top:700px;width:1px;height:19px;background:#c6c6c6;"></div>
<div style="position:absolute;left:372px;top:700px;width:1px;height:19px;background:#c6c6c6;"></div>
<div style="position:absolute;left:480px;top:700px;width:1px;height:19px;background:#c6c6c6;"></div>
<svg style="position:absolute;left:35px;top:706px;" width="4" height="8" viewBox="0 0 4 8"><path d="M4 0 V8 L0 4 Z" fill="#c6c6c6"/></svg>
<svg style="position:absolute;left:64px;top:706px;" width="4" height="8" viewBox="0 0 4 8"><path d="M0 0 V8 L4 4 Z" fill="#c6c6c6"/></svg>
<svg style="position:absolute;left:514px;top:702px;" width="16" height="16" viewBox="0 0 16 16"><circle cx="8" cy="8" r="7" fill="none" stroke="#777" stroke-width="1"/><path d="M4.5 8 H11.5 M8 4.5 V11.5" stroke="#666" stroke-width="1.4"/></svg>
<div style="position:absolute;left:8px;top:724px;width:1366px;height:22px;background:#267a4c;"></div>
<div style="position:absolute;left:1082px;top:724px;width:38px;height:22px;background:#0e6837;"></div>
<svg style="position:absolute;left:1094px;top:728px;" width="13" height="13" viewBox="0 0 13 13"><g shape-rendering="crispEdges"><rect x="0" y="0" width="13" height="13" fill="#fff"/><rect x="1" y="1" width="3" height="3" fill="#0e6837"/><rect x="1" y="5" width="3" height="3" fill="#0e6837"/><rect x="1" y="9" width="3" height="3" fill="#0e6837"/><rect x="5" y="1" width="3" height="3" fill="#0e6837"/><rect x="5" y="5" width="3" height="3" fill="#0e6837"/><rect x="5" y="9" width="3" height="3" fill="#0e6837"/><rect x="9" y="1" width="3" height="3" fill="#0e6837"/><rect x="9" y="5" width="3" height="3" fill="#0e6837"/><rect x="9" y="9" width="3" height="3" fill="#0e6837"/></g></svg>
<svg style="position:absolute;left:1132px;top:728px;" width="14" height="13" viewBox="0 0 14 13"><g shape-rendering="crispEdges"><rect x="0.5" y="0.5" width="13" height="12" fill="none" stroke="#fff"/><rect x="3.5" y="2.5" width="7" height="8" fill="none" stroke="#fff"/><rect x="5" y="4" width="4" height="1" fill="#fff"/><rect x="5" y="6" width="4" height="1" fill="#fff"/><rect x="5" y="8" width="4" height="1" fill="#fff"/></g></svg>
<svg style="position:absolute;left:1170px;top:728px;" width="14" height="13" viewBox="0 0 14 13"><g shape-rendering="crispEdges"><rect x="0.5" y="0.5" width="13" height="12" fill="none" stroke="#fff"/><rect x="1" y="1" width="8" height="7" fill="#e6f0ea"/><rect x="4" y="1" width="1" height="7" fill="#267a4c"/><rect x="9" y="1" width="1" height="8" fill="#fff"/><rect x="1" y="8" width="9" height="1" fill="#fff"/></g></svg>
<div style="position:absolute;left:1201px;top:734px;width:6px;height:2px;background:#fff;"></div>
<div style="position:absolute;left:1211px;top:734px;width:100px;height:1px;background:#fff;"></div>
<div style="position:absolute;left:1259px;top:729px;width:4px;height:11px;background:#fff;"></div>
<div style="position:absolute;left:1315px;top:734px;width:8px;height:2px;background:#fff;"></div>
<div style="position:absolute;left:1318px;top:731px;width:2px;height:8px;background:#fff;"></div>
<span class="t" style="font-size:12.5px;color:#adadad;top:14.75px;left:240.89px;letter-spacing:-0.500px;transform:scaleX(0.9694);">Copy of suo_phe6203_asthma_survey_2013_0.xls</span>
<span class="t" style="font-size:12.5px;color:#adadad;top:14.75px;left:498.89px;letter-spacing:-0.123px;">[Compatibility Mode] - Excel</span>
<span class="t" style="font-size:11px;color:#1c801c;top:15.50px;left:790.06px;letter-spacing:-0.500px;transform:scaleX(0.9719);">PIVOTCHART TOOLS</span>
<span class="t" style="font-size:12px;color:#fff;top:40.00px;left:26.87px;letter-spacing:-0.500px;transform:scaleX(0.9077);">FILE</span>
<span class="t" style="font-size:12px;color:#444444;top:40.00px;left:84.14px;letter-spacing:-0.309px;">HOME</span>
<span class="t" style="font-size:12px;color:#444444;top:40.00px;left:146.67px;letter-spacing:-0.500px;transform:scaleX(0.8989);">INSERT</span>
<span class="t" style="font-size:12px;color:#444444;top:40.00px;left:212.74px;letter-spacing:-0.500px;transform:scaleX(0.9650);">PAGE LAYOUT</span>
<span class="t" style="font-size:12px;color:#444444;top:40.00px;left:317.65px;letter-spacing:-0.500px;transform:scaleX(0.9789);">FORMULAS</span>
<span class="t" style="font-size:12px;color:#444444;top:40.00px;left:407.33px;letter-spacing:-0.334px;">DATA</span>
<span class="t" style="font-size:12px;color:#444444;top:40.00px;left:466.09px;letter-spacing:-0.500px;transform:scaleX(0.8948);">REVIEW</span>
<span class="t" style="font-size:12px;color:#444444;top:40.00px;left:534.80px;letter-spacing:-0.500px;transform:scaleX(0.9162);">VIEW</span>
<span class="t" style="font-size:12px;color:#444444;top:40.00px;left:590.95px;letter-spacing:-0.500px;transform:scaleX(0.9560);">LOAD TEST</span>
<span class="t" style="font-size:12px;color:#444444;top:40.00px;left:680.22px;letter-spacing:-0.500px;">TEAM</span>
<span class="t" style="font-size:12px;color:#444444;top:40.00px;left:743.08px;letter-spacing:-0.500px;">ANALYZE</span>
<span class="t" style="font-size:12px;color:#444444;top:40.00px;left:820.76px;letter-spacing:-0.500px;transform:scaleX(0.9433);">DESIGN</span>
<span class="t" style="font-size:12px;color:#1c801c;top:40.00px;left:890.27px;letter-spacing:-0.489px;">FORMAT</span>
<span class="t" style="font-size:13px;color:#b2b2b2;top:13.00px;font-weight:bold;left:1238.62px;transform:scaleX(0.9800);-webkit-text-stroke:0.4px #b2b2b2;">?</span>
<span class="t" style="font-size:12px;color:#444;top:39.00px;left:1248.50px;letter-spacing:0.095px;">Martin Chege</span>
<span class="t" style="font-size:12px;color:#1a1a1a;top:67.00px;left:14.93px;letter-spacing:-0.149px;">Chart Area</span>
<span class="t" style="font-size:12px;color:#4a4a4a;top:90.00px;left:34.18px;letter-spacing:-0.115px;">Format Selection</span>
<span class="t" style="font-size:12px;color:#4a4a4a;top:113.00px;left:34.18px;letter-spacing:-0.160px;">Reset to Match Style</span>
<span class="t" style="font-size:12px;color:#666666;top:136.00px;left:39.86px;letter-spacing:-0.235px;">Current Selection</span>
<span class="t" style="font-size:12px;color:#b4b4b4;top:101.00px;left:249.66px;letter-spacing:-0.125px;">Change</span>
<span class="t" style="font-size:12px;color:#b4b4b4;top:117.00px;left:249.47px;letter-spacing:-0.264px;">Shape</span>
<span class="t" style="font-size:12px;color:#666666;top:136.00px;left:194.57px;letter-spacing:-0.374px;">Insert Shapes</span>
<span class="t" style="font-size:11px;color:#000;top:87.50px;left:323.41px;letter-spacing:-0.310px;">Abc</span>
<span class="t" style="font-size:11px;color:#000;top:87.50px;left:379.41px;letter-spacing:-0.310px;">Abc</span>
<span class="t" style="font-size:11px;color:#000;top:87.50px;left:435.41px;letter-spacing:-0.310px;">Abc</span>
<span class="t" style="font-size:12px;color:#4a4a4a;top:67.00px;left:512.71px;letter-spacing:-0.303px;">Shape Fill</span>
<span class="t" style="font-size:12px;color:#4a4a4a;top:90.00px;left:512.71px;letter-spacing:-0.098px;">Shape Outline</span>
<span class="t" style="font-size:12px;color:#4a4a4a;top:113.00px;left:512.71px;letter-spacing:-0.354px;">Shape Effects</span>
<span class="t" style="font-size:12px;color:#666666;top:136.00px;left:411.24px;letter-spacing:-0.500px;transform:scaleX(0.9817);">Shape Styles</span>
<span class="t" style="font-size:40px;color:#000;top:76.00px;left:625.40px;transform:scaleX(0.9099);-webkit-text-stroke:0.8px #000;text-shadow:1px 1.5px 2px rgba(0,0,0,0.35);">A</span>
<span class="t" style="font-size:40px;color:#4f86c6;top:76.00px;left:682.40px;transform:scaleX(0.8937);-webkit-text-stroke:0.8px #4f86c6;text-shadow:1px 1.5px 2px rgba(0,0,0,0.3);">A</span>
<span class="t" style="font-size:39.5px;color:#efbcba;top:76.25px;left:737.20px;transform:scaleX(0.9618);-webkit-text-stroke:3.8px #c9504c;paint-order:stroke fill;">A</span>
<span class="t" style="font-size:14px;color:#4a4a4a;top:64.00px;font-weight:bold;left:804.20px;transform:scaleX(0.9934);">A</span>
<span class="t" style="font-size:14px;color:#fff;top:86.00px;font-weight:bold;left:803.69px;transform:scaleX(1.0778);-webkit-text-stroke:1.7px #555;paint-order:stroke fill;">A</span>
<span class="t" style="font-size:15.5px;color:#fff;top:108.75px;font-weight:bold;left:802.67px;transform:scaleX(1.0476);-webkit-text-stroke:2.4px #3f7fc8;paint-order:stroke fill;text-shadow:0 0 2.5px #6fa4e0;">A</span>
<span class="t" style="font-size:12px;color:#666666;top:136.00px;left:675.45px;letter-spacing:-0.331px;">WordArt Styles</span>
<span class="t" style="font-size:12px;color:#b4b4b4;top:67.00px;left:863.33px;letter-spacing:-0.053px;">Bring Forward</span>
<span class="t" style="font-size:12px;color:#b4b4b4;top:90.00px;left:863.46px;letter-spacing:-0.285px;">Send Backward</span>
<span class="t" style="font-size:12px;color:#4a4a4a;top:113.00px;left:863.46px;letter-spacing:-0.232px;">Selection Pane</span>
<span class="t" style="font-size:12px;color:#4a4a4a;top:67.00px;left:986.42px;letter-spacing:0.330px;">Align</span>
<span class="t" style="font-size:12px;color:#b4b4b4;top:90.00px;left:985.67px;letter-spacing:0.045px;">Group</span>
<span class="t" style="font-size:12px;color:#b4b4b4;top:113.00px;left:985.41px;letter-spacing:-0.119px;">Rotate</span>
<span class="t" style="font-size:12px;color:#666666;top:136.00px;left:918.42px;letter-spacing:-0.380px;">Arrange</span>
<span class="t" style="font-size:12px;color:#1a1a1a;top:75.00px;left:1069.01px;letter-spacing:-0.218px;">7.62 cm</span>
<span class="t" style="font-size:12px;color:#1a1a1a;top:106.00px;left:1068.63px;letter-spacing:-0.155px;">12.7 cm</span>
<span class="t" style="font-size:12px;color:#666666;top:136.00px;left:1072.22px;letter-spacing:-0.500px;transform:scaleX(0.8986);">Size</span>
<span class="t" style="font-size:13.2px;color:#3c3c3c;top:200.90px;left:34.00px;width:115.00px;text-align:center;transform:scaleX(0.9);transform-origin:50% 50%;">A</span>
<span class="t" style="font-size:13.2px;color:#3c3c3c;top:200.90px;left:150.00px;width:37.00px;text-align:center;transform:scaleX(0.9);transform-origin:50% 50%;">B</span>
<span class="t" style="font-size:13.2px;color:#3c3c3c;top:200.90px;left:188.00px;width:37.00px;text-align:center;transform:scaleX(0.9);transform-origin:50% 50%;">C</span>
<span class="t" style="font-size:13.2px;color:#3c3c3c;top:200.90px;left:226.00px;width:37.00px;text-align:center;transform:scaleX(0.9);transform-origin:50% 50%;">D</span>
<span class="t" style="font-size:13.2px;color:#3c3c3c;top:200.90px;left:264.00px;width:63.00px;text-align:center;transform:scaleX(0.9);transform-origin:50% 50%;">E</span>
<span class="t" style="font-size:13.2px;color:#3c3c3c;top:200.90px;left:328.00px;width:63.00px;text-align:center;transform:scaleX(0.9);transform-origin:50% 50%;">F</span>
<span class="t" style="font-size:13.2px;color:#3c3c3c;top:200.90px;left:392.00px;width:63.00px;text-align:center;transform:scaleX(0.9);transform-origin:50% 50%;">G</span>
<span class="t" style="font-size:13.2px;color:#3c3c3c;top:200.90px;left:456.00px;width:63.00px;text-align:center;transform:scaleX(0.9);transform-origin:50% 50%;">H</span>
<span class="t" style="font-size:13.2px;color:#3c3c3c;top:200.90px;left:520.00px;width:63.00px;text-align:center;transform:scaleX(0.9);transform-origin:50% 50%;">I</span>
<span class="t" style="font-size:13.2px;color:#3c3c3c;top:200.90px;left:584.00px;width:63.00px;text-align:center;transform:scaleX(0.9);transform-origin:50% 50%;">J</span>
<span class="t" style="font-size:13.2px;color:#3c3c3c;top:200.90px;left:648.00px;width:63.00px;text-align:center;transform:scaleX(0.9);transform-origin:50% 50%;">K</span>
<span class="t" style="font-size:13.2px;color:#3c3c3c;top:200.90px;left:712.00px;width:63.00px;text-align:center;transform:scaleX(0.9);transform-origin:50% 50%;">L</span>
<span class="t" style="font-size:13.2px;color:#3c3c3c;top:200.90px;left:776.00px;width:63.00px;text-align:center;transform:scaleX(0.9);transform-origin:50% 50%;">M</span>
<span class="t" style="font-size:13.2px;color:#3c3c3c;top:200.90px;left:840.00px;width:63.00px;text-align:center;transform:scaleX(0.9);transform-origin:50% 50%;">N</span>
<span class="t" style="font-size:13.2px;color:#3c3c3c;top:200.90px;left:904.00px;width:63.00px;text-align:center;transform:scaleX(0.9);transform-origin:50% 50%;">O</span>
<span class="t" style="font-size:13.2px;color:#3c3c3c;top:200.90px;left:968.00px;width:63.00px;text-align:center;transform:scaleX(0.9);transform-origin:50% 50%;">P</span>
<span class="t" style="font-size:13.2px;color:#3c3c3c;top:200.90px;left:1032.00px;width:63.00px;text-align:center;transform:scaleX(0.9);transform-origin:50% 50%;">Q</span>
<span class="t" style="font-size:13.2px;color:#3c3c3c;top:200.90px;left:1096.00px;width:63.00px;text-align:center;transform:scaleX(0.9);transform-origin:50% 50%;">R</span>
<span class="t" style="font-size:13.2px;color:#3c3c3c;top:200.90px;left:1160.00px;width:63.00px;text-align:center;transform:scaleX(0.9);transform-origin:50% 50%;">S</span>
<span class="t" style="font-size:13.2px;color:#3c3c3c;top:200.90px;left:1224.00px;width:63.00px;text-align:center;transform:scaleX(0.9);transform-origin:50% 50%;">T</span>
<span class="t" style="font-size:13.2px;color:#3c3c3c;top:200.90px;left:1288.00px;width:63.00px;text-align:center;transform:scaleX(0.9);transform-origin:50% 50%;">U</span>
<span class="t" style="font-size:13.2px;color:#3c3c3c;top:220.90px;left:8.00px;width:26.00px;text-align:center;">1</span>
<span class="t" style="font-size:13.2px;color:#3c3c3c;top:240.90px;left:8.00px;width:26.00px;text-align:center;">2</span>
<span class="t" style="font-size:13.2px;color:#3c3c3c;top:260.90px;left:8.00px;width:26.00px;text-align:center;">3</span>
<span class="t" style="font-size:13.2px;color:#3c3c3c;top:280.90px;left:8.00px;width:26.00px;text-align:center;">4</span>
<span class="t" style="font-size:13.2px;color:#3c3c3c;top:300.90px;left:8.00px;width:26.00px;text-align:center;">5</span>
<span class="t" style="font-size:13.2px;color:#3c3c3c;top:320.90px;left:8.00px;width:26.00px;text-align:center;">6</span>
<span class="t" style="font-size:13.2px;color:#3c3c3c;top:340.90px;left:8.00px;width:26.00px;text-align:center;">7</span>
<span class="t" style="font-size:13.2px;color:#3c3c3c;top:360.90px;left:8.00px;width:26.00px;text-align:center;">8</span>
<span class="t" style="font-size:13.2px;color:#3c3c3c;top:380.90px;left:8.00px;width:26.00px;text-align:center;">9</span>
<span class="t" style="font-size:13.2px;color:#3c3c3c;top:400.90px;left:8.00px;width:26.00px;text-align:center;">10</span>
<span class="t" style="font-size:13.2px;color:#3c3c3c;top:420.90px;left:8.00px;width:26.00px;text-align:center;">11</span>
<span class="t" style="font-size:13.2px;color:#3c3c3c;top:440.90px;left:8.00px;width:26.00px;text-align:center;">12</span>
<span class="t" style="font-size:13.2px;color:#3c3c3c;top:460.90px;left:8.00px;width:26.00px;text-align:center;">13</span>
<span class="t" style="font-size:13.2px;color:#3c3c3c;top:480.90px;left:8.00px;width:26.00px;text-align:center;">14</span>
<span class="t" style="font-size:13.2px;color:#3c3c3c;top:500.90px;left:8.00px;width:26.00px;text-align:center;">15</span>
<span class="t" style="font-size:13.2px;color:#3c3c3c;top:520.90px;left:8.00px;width:26.00px;text-align:center;">16</span>
<span class="t" style="font-size:13.2px;color:#3c3c3c;top:540.90px;left:8.00px;width:26.00px;text-align:center;">17</span>
<span class="t" style="font-size:13.2px;color:#3c3c3c;top:560.90px;left:8.00px;width:26.00px;text-align:center;">18</span>
<span class="t" style="font-size:13.2px;color:#3c3c3c;top:580.90px;left:8.00px;width:26.00px;text-align:center;">19</span>
<span class="t" style="font-size:13.2px;color:#3c3c3c;top:600.90px;left:8.00px;width:26.00px;text-align:center;">20</span>
<span class="t" style="font-size:13.2px;color:#3c3c3c;top:620.90px;left:8.00px;width:26.00px;text-align:center;">21</span>
<span class="t" style="font-size:13.2px;color:#3c3c3c;top:640.90px;left:8.00px;width:26.00px;text-align:center;">22</span>
<span class="t" style="font-size:13.2px;color:#3c3c3c;top:660.90px;left:8.00px;width:26.00px;text-align:center;">23</span>
<span class="t" style="font-size:13.2px;color:#3c3c3c;top:680.90px;left:8.00px;width:26.00px;text-align:center;">24</span>
<span class="t" style="font-size:13.2px;color:#000;top:260.90px;left:35.10px;letter-spacing:0.222px;">Data</span>
<span class="t" style="font-size:13.2px;color:#000;top:260.90px;left:152.20px;letter-spacing:0.730px;">Total</span>
<span class="t" style="font-size:13.2px;color:#000;top:280.90px;left:35.65px;letter-spacing:0.291px;">Sum of Asthma</span>
<span class="t" style="font-size:13.2px;color:#000;top:280.90px;left:170.64px;letter-spacing:-0.500px;transform:scaleX(0.9854);">91</span>
<span class="t" style="font-size:13.2px;color:#000;top:300.90px;left:35.65px;letter-spacing:-0.023px;">Sum of RAD</span>
<span class="t" style="font-size:13.2px;color:#000;top:300.90px;left:170.64px;letter-spacing:-0.500px;transform:scaleX(0.9854);">93</span>
<span class="t" style="font-size:13.2px;color:#000;top:320.90px;left:35.65px;letter-spacing:0.301px;">Sum of Bronchitis</span>
<span class="t" style="font-size:13.2px;color:#000;top:320.90px;left:170.64px;letter-spacing:-0.500px;">86</span>
<span class="t" style="font-size:13.2px;color:#000;top:340.90px;left:35.65px;letter-spacing:0.355px;">Sum of Wheezing</span>
<span class="t" style="font-size:13.2px;color:#000;top:340.90px;left:170.64px;letter-spacing:-0.500px;transform:scaleX(0.9854);">99</span>
<span class="t" style="font-size:13.2px;color:#000;top:360.90px;left:36.20px;letter-spacing:0.019px;">Total Cases</span>
<span class="t" style="font-size:13.2px;color:#000;top:360.90px;left:164.85px;letter-spacing:-0.500px;transform:scaleX(0.9500);">369</span>
<span class="t" style="font-size:11px;color:#333;top:260.50px;left:227.93px;letter-spacing:0.196px;">Sum of Asthma</span>
<span class="t" style="font-size:11px;color:#333;top:260.50px;left:312.92px;letter-spacing:-0.053px;">Sum of RAD</span>
<span class="t" style="font-size:11px;color:#333;top:260.50px;left:381.92px;letter-spacing:0.277px;">Sum of Bronchitis</span>
<span class="t" style="font-size:11px;color:#333;top:260.50px;left:480.92px;letter-spacing:0.302px;">Sum of Wheezing</span>
<span class="t" style="font-size:11px;color:#333;top:514.50px;left:228.07px;letter-spacing:0.176px;">Values</span>
<span class="t" style="font-size:16.5px;color:#595959;top:289.75px;left:436.06px;letter-spacing:0.164px;">Total</span>
<span class="t" style="font-size:10.5px;color:#595959;top:318.75px;left:221.42px;letter-spacing:0.502px;">100</span>
<span class="t" style="font-size:10.5px;color:#595959;top:349.75px;left:227.72px;letter-spacing:0.604px;">95</span>
<span class="t" style="font-size:10.5px;color:#595959;top:380.75px;left:227.72px;letter-spacing:0.541px;">90</span>
<span class="t" style="font-size:10.5px;color:#595959;top:411.75px;left:227.76px;letter-spacing:0.560px;">85</span>
<span class="t" style="font-size:10.5px;color:#595959;top:442.75px;left:227.76px;letter-spacing:0.498px;">80</span>
<span class="t" style="font-size:10.5px;color:#595959;top:473.75px;left:227.68px;letter-spacing:0.639px;">75</span>
<span class="t" style="font-size:10.5px;color:#595959;top:489.75px;left:259.76px;letter-spacing:0.271px;">Sum of Asthma</span>
<span class="t" style="font-size:10.5px;color:#595959;top:489.75px;left:360.96px;letter-spacing:-0.051px;">Sum of RAD</span>
<span class="t" style="font-size:10.5px;color:#595959;top:489.75px;left:439.98px;letter-spacing:0.233px;">Sum of Bronchitis</span>
<span class="t" style="font-size:10.5px;color:#595959;top:489.75px;left:532.53px;letter-spacing:0.285px;">Sum of Wheezing</span>
<span class="t" style="font-size:10.5px;color:#595959;top:404.75px;left:652.76px;letter-spacing:0.689px;">Total</span>
<span class="t" style="font-size:13px;color:#1e6e41;top:703.00px;font-weight:bold;left:120.18px;letter-spacing:-0.377px;">Sheet7</span>
<span class="t" style="font-size:13px;color:#444;top:703.00px;left:188.29px;letter-spacing:-0.162px;">Asthma Data</span>
<span class="t" style="font-size:13px;color:#444;top:703.00px;left:292.29px;letter-spacing:-0.242px;">Asthma DD</span>
<span class="t" style="font-size:13px;color:#444;top:703.00px;left:385.07px;letter-spacing:0.382px;">gender report</span>
<span class="t" style="font-size:11px;color:#fff;top:728.50px;left:15.86px;letter-spacing:-0.500px;transform:scaleX(0.9206);">READY</span>
<span class="t" style="font-size:11px;color:#fff;top:728.50px;left:1338.95px;letter-spacing:-0.271px;">100%</span>
</body></html>
